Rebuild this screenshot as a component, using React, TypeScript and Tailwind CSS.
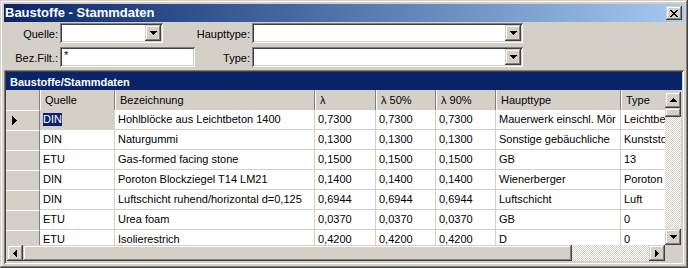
import React from "react";

const raised =
  "shadow-[inset_-1px_-1px_#404040,inset_1px_1px_#d4d0c8,inset_-2px_-2px_#808080,inset_2px_2px_#ffffff]";
const sunken =
  "shadow-[inset_1px_1px_#808080,inset_-1px_-1px_#ffffff,inset_2px_2px_#404040,inset_-2px_-2px_#d4d0c8]";
const checker =
  "bg-[repeating-conic-gradient(#ffffff_0%_25%,#d4d0c8_0%_50%)] bg-[length:2px_2px]";

function Tri({ dir }: { dir: "up" | "down" | "left" | "right" }) {
  if (dir === "down")
    return (
      <svg width="7" height="4" viewBox="0 0 7 4" shapeRendering="crispEdges">
        <rect x="0" y="0" width="7" height="1" fill="#000" />
        <rect x="1" y="1" width="5" height="1" fill="#000" />
        <rect x="2" y="2" width="3" height="1" fill="#000" />
        <rect x="3" y="3" width="1" height="1" fill="#000" />
      </svg>
    );
  if (dir === "up")
    return (
      <svg width="7" height="4" viewBox="0 0 7 4" shapeRendering="crispEdges">
        <rect x="3" y="0" width="1" height="1" fill="#000" />
        <rect x="2" y="1" width="3" height="1" fill="#000" />
        <rect x="1" y="2" width="5" height="1" fill="#000" />
        <rect x="0" y="3" width="7" height="1" fill="#000" />
      </svg>
    );
  if (dir === "left")
    return (
      <svg width="4" height="7" viewBox="0 0 4 7" shapeRendering="crispEdges">
        <rect x="3" y="0" width="1" height="7" fill="#000" />
        <rect x="2" y="1" width="1" height="5" fill="#000" />
        <rect x="1" y="2" width="1" height="3" fill="#000" />
        <rect x="0" y="3" width="1" height="1" fill="#000" />
      </svg>
    );
  return (
    <svg width="4" height="7" viewBox="0 0 4 7" shapeRendering="crispEdges">
      <rect x="0" y="0" width="1" height="7" fill="#000" />
      <rect x="1" y="1" width="1" height="5" fill="#000" />
      <rect x="2" y="2" width="1" height="3" fill="#000" />
      <rect x="3" y="3" width="1" height="1" fill="#000" />
    </svg>
  );
}

function CloseX() {
  const rows = [
    [0, 1, 6, 7],
    [1, 2, 5, 6],
    [2, 3, 4, 5],
    [3, 4],
    [2, 3, 4, 5],
    [1, 2, 5, 6],
    [0, 1, 6, 7],
  ];
  return (
    <svg width="8" height="7" viewBox="0 0 8 7" shapeRendering="crispEdges">
      {rows.map((r, y) =>
        r.map((x) => <rect key={`${y}-${x}`} x={x} y={y} width="1" height="1" fill="#000" />)
      )}
    </svg>
  );
}

function Combo({ w }: { w: string }) {
  return (
    <div className={`${w} h-[20px] bg-white ${sunken} flex justify-end items-start p-[2px]`}>
      <div className={`w-[16px] h-[16px] bg-[#d4d0c8] ${raised} flex items-center justify-center`}>
        <Tri dir="down" />
      </div>
    </div>
  );
}

type Row = string[];
const rows: Row[] = [
  ["DIN", "Hohlblöcke aus Leichtbeton 1400", "0,7300", "0,7300", "0,7300", "Mauerwerk einschl. Mör", "Leichtbe"],
  ["DIN", "Naturgummi", "0,1300", "0,1300", "0,1300", "Sonstige gebäuchliche", "Kunststo"],
  ["ETU", "Gas-formed facing stone", "0,1500", "0,1500", "0,1500", "GB", "13"],
  ["DIN", "Poroton Blockziegel T14 LM21", "0,1400", "0,1400", "0,1400", "Wienerberger", "Poroton"],
  ["DIN", "Luftschicht ruhend/horizontal d=0,125", "0,6944", "0,6944", "0,6944", "Luftschicht", "Luft"],
  ["ETU", "Urea foam", "0,0370", "0,0370", "0,0370", "GB", "0"],
  ["ETU", "Isolierestrich", "0,4200", "0,4200", "0,4200", "D", "0"],
];

const colW = ["w-[75px]", "w-[200px]", "w-[61px]", "w-[60px]", "w-[60px]", "w-[125px]", "w-[60px]"];
const headers = ["Quelle", "Bezeichnung", "λ", "λ 50%", "λ 90%", "Haupttype", "Type"];

export default function App() {
  return (
    <div
      className={`w-[688px] h-[268px] bg-[#d4d0c8] p-[4px] flex flex-col ${raised} font-['Liberation_Sans',Arial,sans-serif] text-[11px] text-black overflow-hidden`}
    >
      {/* Title bar */}
      <div className="h-[18px] shrink-0 flex items-center justify-between pl-[1px] pr-[2px] bg-gradient-to-r from-[#0a246a] to-[#a6caf0]">
        <span className="text-white font-bold text-[13px] leading-[18px]">Baustoffe - Stammdaten</span>
        <div className={`w-[16px] h-[14px] bg-[#d4d0c8] ${raised} flex items-center justify-center`}>
          <CloseX />
        </div>
      </div>

      {/* Filter rows */}
      <div className="mt-[1px] h-[20px] flex shrink-0">
        <div className="w-[56px] text-right pr-[2px] leading-[20px] pt-[1px]">Quelle:</div>
        <Combo w="w-[103px]" />
        <div className="w-[89px] text-right pr-[2px] leading-[20px] pt-[1px]">Haupttype:</div>
        <Combo w="w-[271px]" />
      </div>
      <div className="mt-[4px] h-[20px] flex shrink-0">
        <div className="w-[56px] text-right pr-[2px] leading-[20px] pt-[1px]">Bez.Filt.:</div>
        <div className={`w-[135px] h-[20px] bg-white ${sunken} pl-[4px] pt-[1px] leading-[14px]`}>*</div>
        <div className="w-[57px] text-right pr-[2px] leading-[20px] pt-[1px]">Type:</div>
        <Combo w="w-[271px]" />
      </div>

      {/* Grid panel */}
      <div className={`mt-[3px] flex-1 min-h-0 flex flex-col p-[2px] ${sunken}`}>
        <div className="h-[18px] shrink-0 bg-[#0a246a] text-white font-bold pl-[4px] pt-[3px] leading-[15px]">
          Baustoffe/Stammdaten
        </div>
        <div className="flex-1 min-h-0 flex">
          <div className="flex-1 min-w-0 overflow-hidden bg-white">
            {/* Header */}
            <div className="flex h-[20px] bg-[#d4d0c8]">
              <div className="w-[34px] shrink-0 border-r border-[#808080]" />
              {headers.map((h, i) => (
                <div
                  key={h}
                  className={`${colW[i]} shrink-0 border-l border-l-white border-r border-r-[#808080] pl-[4px] leading-[20px] whitespace-nowrap overflow-hidden`}
                >
                  {h}
                </div>
              ))}
            </div>
            {rows.map((r, ri) => (
              <div key={ri} className="flex h-[20px]">
                <div className="w-[34px] shrink-0 bg-[#d4d0c8] border-t border-t-white border-r border-r-[#808080] flex items-center pl-[6px]">
                  {ri === 0 && (
                    <svg width="5" height="9" viewBox="0 0 5 9" shapeRendering="crispEdges">
                      <rect x="0" y="0" width="1" height="9" fill="#000" />
                      <rect x="1" y="1" width="1" height="7" fill="#000" />
                      <rect x="2" y="2" width="1" height="5" fill="#000" />
                      <rect x="3" y="3" width="1" height="3" fill="#000" />
                      <rect x="4" y="4" width="1" height="1" fill="#000" />
                    </svg>
                  )}
                </div>
                {r.map((c, ci) => (
                  <div
                    key={ci}
                    className={`${colW[ci]} shrink-0 border-r border-b border-[#d4d0c8] pl-[3px] leading-[19px] whitespace-nowrap overflow-hidden ${
                      ri === 0 && ci === 0 ? "bg-[#d4d0c8] pt-[3px]" : "bg-white"
                    }`}
                  >
                    {ri === 0 && ci === 0 ? (
                      <span className="inline-block bg-[#0a246a] text-white leading-[13px] align-top">{c}</span>
                    ) : (
                      c
                    )}
                  </div>
                ))}
              </div>
            ))}
          </div>
          {/* Vertical scrollbar */}
          <div className="w-[16px] shrink-0 mr-[1px] pt-[2px] flex flex-col bg-[#d4d0c8]">
            <div className={`h-[16px] shrink-0 bg-[#d4d0c8] ${raised} flex items-center justify-center`}>
              <Tri dir="up" />
            </div>
            <div className={`h-[9px] shrink-0 bg-[#d4d0c8] ${raised}`} />
            <div className={`flex-1 ${checker}`} />
            <div className={`h-[16px] shrink-0 bg-[#d4d0c8] ${raised} flex items-center justify-center`}>
              <Tri dir="down" />
            </div>
          </div>
        </div>
        {/* Horizontal scrollbar */}
        <div className="h-[17px] shrink-0 flex pl-[1px] pb-[1px]">
          <div className={`w-[16px] h-[16px] shrink-0 bg-[#d4d0c8] ${raised} flex items-center justify-center`}>
            <Tri dir="left" />
          </div>
          <div className={`w-[549px] h-[16px] shrink-0 bg-[#d4d0c8] ${raised}`} />
          <div className={`flex-1 h-[16px] ${checker}`} />
          <div className={`w-[16px] h-[16px] shrink-0 bg-[#d4d0c8] ${raised} flex items-center justify-center`}>
            <Tri dir="right" />
          </div>
          <div className="w-[16px] h-[16px] shrink-0 mr-[1px] bg-[#d4d0c8]" />
        </div>
      </div>
    </div>
  );
}
